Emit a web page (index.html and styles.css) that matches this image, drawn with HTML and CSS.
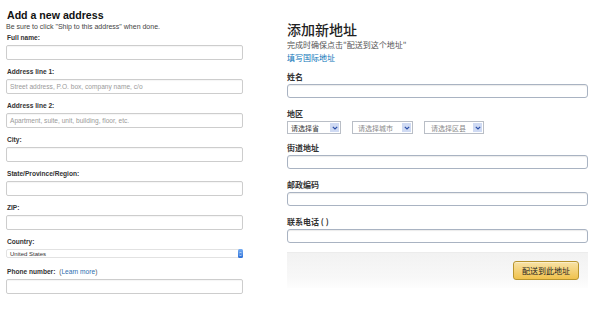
FILE: index.html
```html
<!DOCTYPE html>
<html lang="en">
<head>
    <meta charset="UTF-8">
    <meta name="viewport" content="width=device-width, initial-scale=1.0">
    <title>Add a new address</title>
    <link rel="stylesheet" href="styles.css">
</head>
<body>
    <div class="page">
        <!-- English form -->
        <div class="form-en">
            <h1>Add a new address</h1>
            <p class="hint">Be sure to click "Ship to this address" when done.</p>

            <div class="field">
                <label>Full name:</label>
                <div class="input"></div>
            </div>
            <div class="field">
                <label>Address line 1:</label>
                <div class="input"><span class="ph">Street address, P.O. box, company name, c/o</span></div>
            </div>
            <div class="field">
                <label>Address line 2:</label>
                <div class="input"><span class="ph">Apartment, suite, unit, building, floor, etc.</span></div>
            </div>
            <div class="field">
                <label>City:</label>
                <div class="input"></div>
            </div>
            <div class="field">
                <label>State/Province/Region:</label>
                <div class="input"></div>
            </div>
            <div class="field">
                <label>ZIP:</label>
                <div class="input"></div>
            </div>
            <div class="field field-country">
                <label>Country:</label>
                <div class="country-select">
                    <span>United States</span>
                    <span class="stepper">
                        <svg width="3" height="6" viewBox="0 0 3 6"><path d="M0.3 2.3 L1.5 1 L2.7 2.3 M0.3 3.7 L1.5 5 L2.7 3.7" fill="none" stroke="#fff" stroke-width="0.6"/></svg>
                    </span>
                </div>
            </div>
            <div class="field">
                <label>Phone number: <span class="learn">(<a href="#">Learn more</a>)</span></label>
                <div class="input"></div>
            </div>
        </div>

        <!-- Chinese form -->
        <div class="form-cn">
            <h2>添加新地址</h2>
            <p class="hint-cn">完成时确保点击"配送到这个地址"</p>
            <a class="intl-link" href="#">填写国际地址</a>

            <div class="cn-field">
                <label>姓名</label>
                <div class="cn-input"></div>
            </div>
            <div class="cn-field cn-region">
                <label>地区</label>
                <div class="region-row">
                    <div class="cn-select sel-province">
                        <span class="sel-text">请选择省</span>
                        <span class="sel-arrow"><svg width="6" height="4" viewBox="0 0 6 4"><path d="M0.8 0.8 L3 3 L5.2 0.8" fill="none" stroke="#2b4fa8" stroke-width="1.2"/></svg></span>
                    </div>
                    <div class="cn-select sel-city">
                        <span class="sel-text muted">请选择城市</span>
                        <span class="sel-arrow"><svg width="6" height="4" viewBox="0 0 6 4"><path d="M0.8 0.8 L3 3 L5.2 0.8" fill="none" stroke="#2b4fa8" stroke-width="1.2"/></svg></span>
                    </div>
                    <div class="cn-select sel-district">
                        <span class="sel-text muted">请选择区县</span>
                        <span class="sel-arrow"><svg width="6" height="4" viewBox="0 0 6 4"><path d="M0.8 0.8 L3 3 L5.2 0.8" fill="none" stroke="#2b4fa8" stroke-width="1.2"/></svg></span>
                    </div>
                </div>
            </div>
            <div class="cn-field">
                <label>街道地址</label>
                <div class="cn-input"></div>
            </div>
            <div class="cn-field">
                <label>邮政编码</label>
                <div class="cn-input"></div>
            </div>
            <div class="cn-field">
                <label>联系电话 ( )</label>
                <div class="cn-input"></div>
            </div>

            <div class="cn-footer">
                <button class="ship-btn">配送到此地址</button>
            </div>
        </div>
    </div>
</body>
</html>
```

FILE: styles.css
```css
body {
    margin: 0;
    background: #fff;
}

.page {
    display: flex;
    width: 600px;
    height: 315px;
    overflow: hidden;
}

/* English form */
.form-en {
    width: 237px;
    padding: 9px 0 0 6px;
    font-family: "Liberation Sans", Arial, sans-serif;
    color: #333;
}

.form-en h1 {
    margin: 0 0 0 1px;
    font-size: 10.6px;
    line-height: 13px;
    font-weight: bold;
    color: #111;
}

.hint {
    margin: 1px 0 3px 0;
    font-size: 7px;
    line-height: 8px;
    color: #444;
}

.field {
    margin-bottom: 8px;
}

.field label {
    display: block;
    margin: 0 0 3px 1px;
    font-size: 6.6px;
    line-height: 8px;
    font-weight: bold;
    color: #333;
}

.learn {
    font-weight: normal;
    color: #555;
    margin-left: 2px;
}

.learn a {
    color: #2a6eb0;
    text-decoration: none;
}

.input {
    box-sizing: border-box;
    height: 15px;
    border: 1px solid #cdcdcd;
    border-radius: 2px;
    box-shadow: inset 0 1px 1px rgba(0, 0, 0, 0.04);
    padding: 0 3px;
    display: flex;
    align-items: center;
}

.ph {
    font-size: 6.6px;
    color: #9a9a9a;
}

.field-country {
    margin-bottom: 10px;
}

.country-select {
    box-sizing: border-box;
    height: 9px;
    border: 1px solid #e2e2e2;
    border-radius: 2px;
    padding-left: 3px;
    display: flex;
    align-items: center;
    justify-content: space-between;
    font-size: 6px;
    color: #333;
}

.stepper {
    width: 5px;
    height: 9px;
    margin-right: -1px;
    border-radius: 1.5px;
    background: linear-gradient(#75aef5, #2d6fd6);
    display: flex;
    align-items: center;
    justify-content: center;
}

/* Chinese form */
.form-cn {
    width: 301px;
    margin-left: 44px;
    padding-top: 20px;
    font-family: "Noto Sans CJK SC", "Noto Sans", sans-serif;
    color: #333;
}

.form-cn h2 {
    margin: 0;
    font-size: 14px;
    line-height: 18px;
    font-weight: 500;
    color: #222;
}

.hint-cn {
    margin: 0;
    font-size: 8px;
    line-height: 13px;
    color: #555;
}

.intl-link {
    display: block;
    font-size: 8px;
    line-height: 13px;
    color: #0a74b8;
    text-decoration: none;
}

.cn-field {
    margin-bottom: 10px;
}

.cn-field label {
    display: block;
    margin-bottom: 2px;
    font-size: 8px;
    line-height: 11px;
    font-weight: bold;
    color: #333;
}

.form-cn .cn-field:first-of-type {
    margin-top: 7px;
}

.cn-input {
    box-sizing: border-box;
    height: 14px;
    border: 1px solid #a9b3c2;
    border-radius: 3px;
    box-shadow: inset 0 1px 1px rgba(0, 0, 0, 0.08);
}

.cn-region {
    margin-bottom: 8px;
}

.region-row {
    display: flex;
    gap: 11px;
}

.cn-select {
    box-sizing: border-box;
    height: 13px;
    border: 1px solid #b9bec6;
    display: flex;
    align-items: center;
    justify-content: space-between;
    padding: 0 1px 0 3px;
    background: #fff;
}

.sel-province { width: 54px; }
.sel-city { width: 61px; padding-left: 5px; }
.sel-district { width: 60px; padding-left: 6px; }

.sel-text {
    font-size: 7px;
    color: #333;
}

.sel-text.muted {
    color: #8a8a8a;
}

.sel-arrow {
    width: 9px;
    height: 9px;
    background: #cfdaf3;
    display: flex;
    align-items: center;
    justify-content: center;
}

.cn-footer {
    margin-top: -1px;
    height: 36px;
    box-sizing: border-box;
    border-top: 1px solid #ececec;
    background: linear-gradient(#f2f2f2, #f8f8f8 70%, #fdfdfd);
    display: flex;
    justify-content: flex-end;
    align-items: center;
    padding-right: 9px;
}

.ship-btn {
    width: 66px;
    height: 19px;
    padding: 0;
    border: 1px solid #b8952f;
    border-radius: 3px;
    background: linear-gradient(#f8e2a6, #f0c24c);
    box-shadow: 0 1px 0 rgba(255, 255, 255, 0.4) inset;
    font-family: "Noto Sans CJK SC", sans-serif;
    font-size: 8px;
    color: #222;
}
```
